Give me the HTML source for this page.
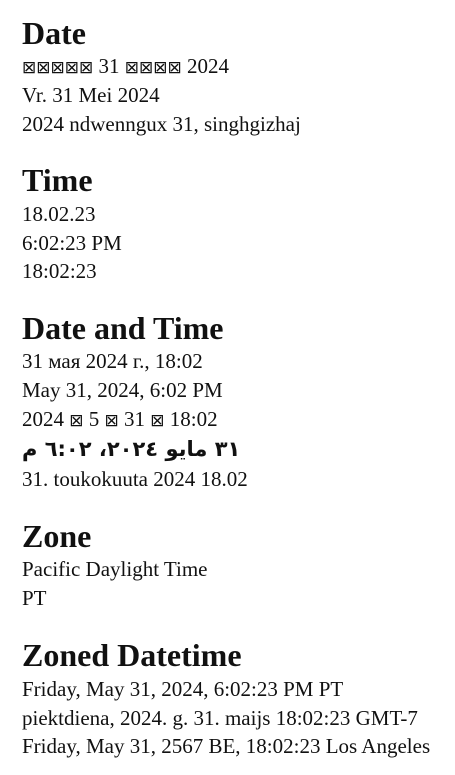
<!DOCTYPE html>
<html><head><meta charset="utf-8"><style>
body{margin:0;width:455px;height:775px;background:#fff;color:#111;font-family:"Liberation Serif",serif;overflow:hidden}
div{position:absolute;left:22px;white-space:nowrap;line-height:30px;font-size:21px}
.h{font-weight:bold;font-size:32px;line-height:40px}
.b{font-family:"DejaVu Sans",sans-serif;font-size:17px}
.ar{font-family:"DejaVu Sans","Noto Sans CJK SC",sans-serif;font-size:21px;font-weight:bold}
</style></head><body>
<div class="h" style="top:13px">Date</div>
<div style="top:51px"><span class="b">⊠⊠⊠⊠⊠</span> 31 <span class="b">⊠⊠⊠⊠</span> 2024</div>
<div style="top:80px">Vr. 31 Mei 2024</div>
<div style="top:109px">2024 ndwenngux 31, singhgizhaj</div>

<div class="h" style="top:160px">Time</div>
<div style="top:199px">18.02.23</div>
<div style="top:228px">6:02:23 PM</div>
<div style="top:256px">18:02:23</div>

<div class="h" style="top:308px">Date and Time</div>
<div style="top:346px">31 мая 2024 г., 18:02</div>
<div style="top:375px">May 31, 2024, 6:02 PM</div>
<div style="top:404px">2024 <span class="b">⊠</span> 5 <span class="b">⊠</span> 31 <span class="b">⊠</span> 18:02</div>
<div class="ar" style="top:434px"><span dir="rtl" style="unicode-bidi:isolate">٣١ مايو ٢٠٢٤، ٦:٠٢ م</span></div>
<div style="top:464px">31. toukokuuta 2024 18.02</div>

<div class="h" style="top:516px">Zone</div>
<div style="top:554px">Pacific Daylight Time</div>
<div style="top:583px">PT</div>

<div class="h" style="top:635px">Zoned Datetime</div>
<div style="top:674px">Friday, May 31, 2024, 6:02:23 PM PT</div>
<div style="top:703px">piektdiena, 2024. g. 31. maijs 18:02:23 GMT-7</div>
<div style="top:731px">Friday, May 31, 2567 BE, 18:02:23 Los Angeles</div>
</body></html>
